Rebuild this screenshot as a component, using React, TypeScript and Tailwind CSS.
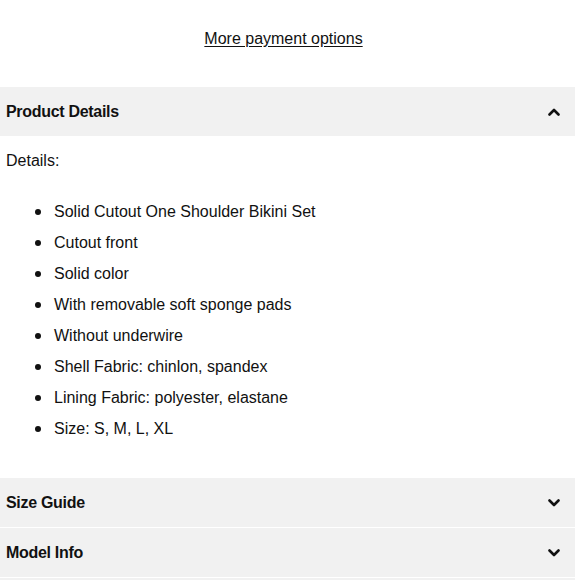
import React from "react";

const details = [
  "Solid Cutout One Shoulder Bikini Set",
  "Cutout front",
  "Solid color",
  "With removable soft sponge pads",
  "Without underwire",
  "Shell Fabric: chinlon, spandex",
  "Lining Fabric: polyester, elastane",
  "Size: S, M, L, XL",
];

function Chevron({ up = false }: { up?: boolean }) {
  return (
    <svg width="12" height="8" viewBox="0 0 12 8" className={up ? "rotate-180" : ""}>
      <path d="M1.5 1.5 L6 6 L10.5 1.5" fill="none" stroke="#111" strokeWidth="2.6" strokeLinecap="round" strokeLinejoin="round" />
    </svg>
  );
}

function AccordionHeader({ title, open = false }: { title?: string; open?: boolean }) {
  return (
    <div className="flex h-[49px] items-center justify-between bg-[#f1f1f1] pl-[6px] pr-[15px]">
      <span className="text-[16px] font-bold tracking-[-0.3px] text-[#111]">{title}</span>
      <Chevron up={open} />
    </div>
  );
}

export default function App() {
  return (
    <div className="h-[580px] w-[580px] overflow-hidden bg-white" style={{ fontFamily: '"Liberation Sans", Arial, sans-serif' }}>
      <div className="w-[575px]">
        <div className="flex h-[87px] items-start justify-center pr-[8px] pt-[27px]">
          <a className="text-[16px] text-[#111] underline underline-offset-2">More payment options</a>
        </div>

        <AccordionHeader title="Product Details" open />

        <div className="pb-[34px] pl-[6px] pt-[14px] text-[16px] text-[#111]">
          <p className="leading-[22px]">Details:</p>
          <ul className="mt-[24px] flex flex-col">
            {details.map((d) => (
              <li key={d} className="flex h-[31px] items-center">
                <span className="ml-[29px] mr-[13px] h-[6px] w-[6px] rounded-full bg-[#111]" />
                <span>{d}</span>
              </li>
            ))}
          </ul>
        </div>

        <div className="flex flex-col gap-[1px]">
          <AccordionHeader title="Size Guide" />
          <AccordionHeader title="Model Info" />
          <div className="h-[49px] bg-[#f1f1f1]" />
        </div>
      </div>
    </div>
  );
}
